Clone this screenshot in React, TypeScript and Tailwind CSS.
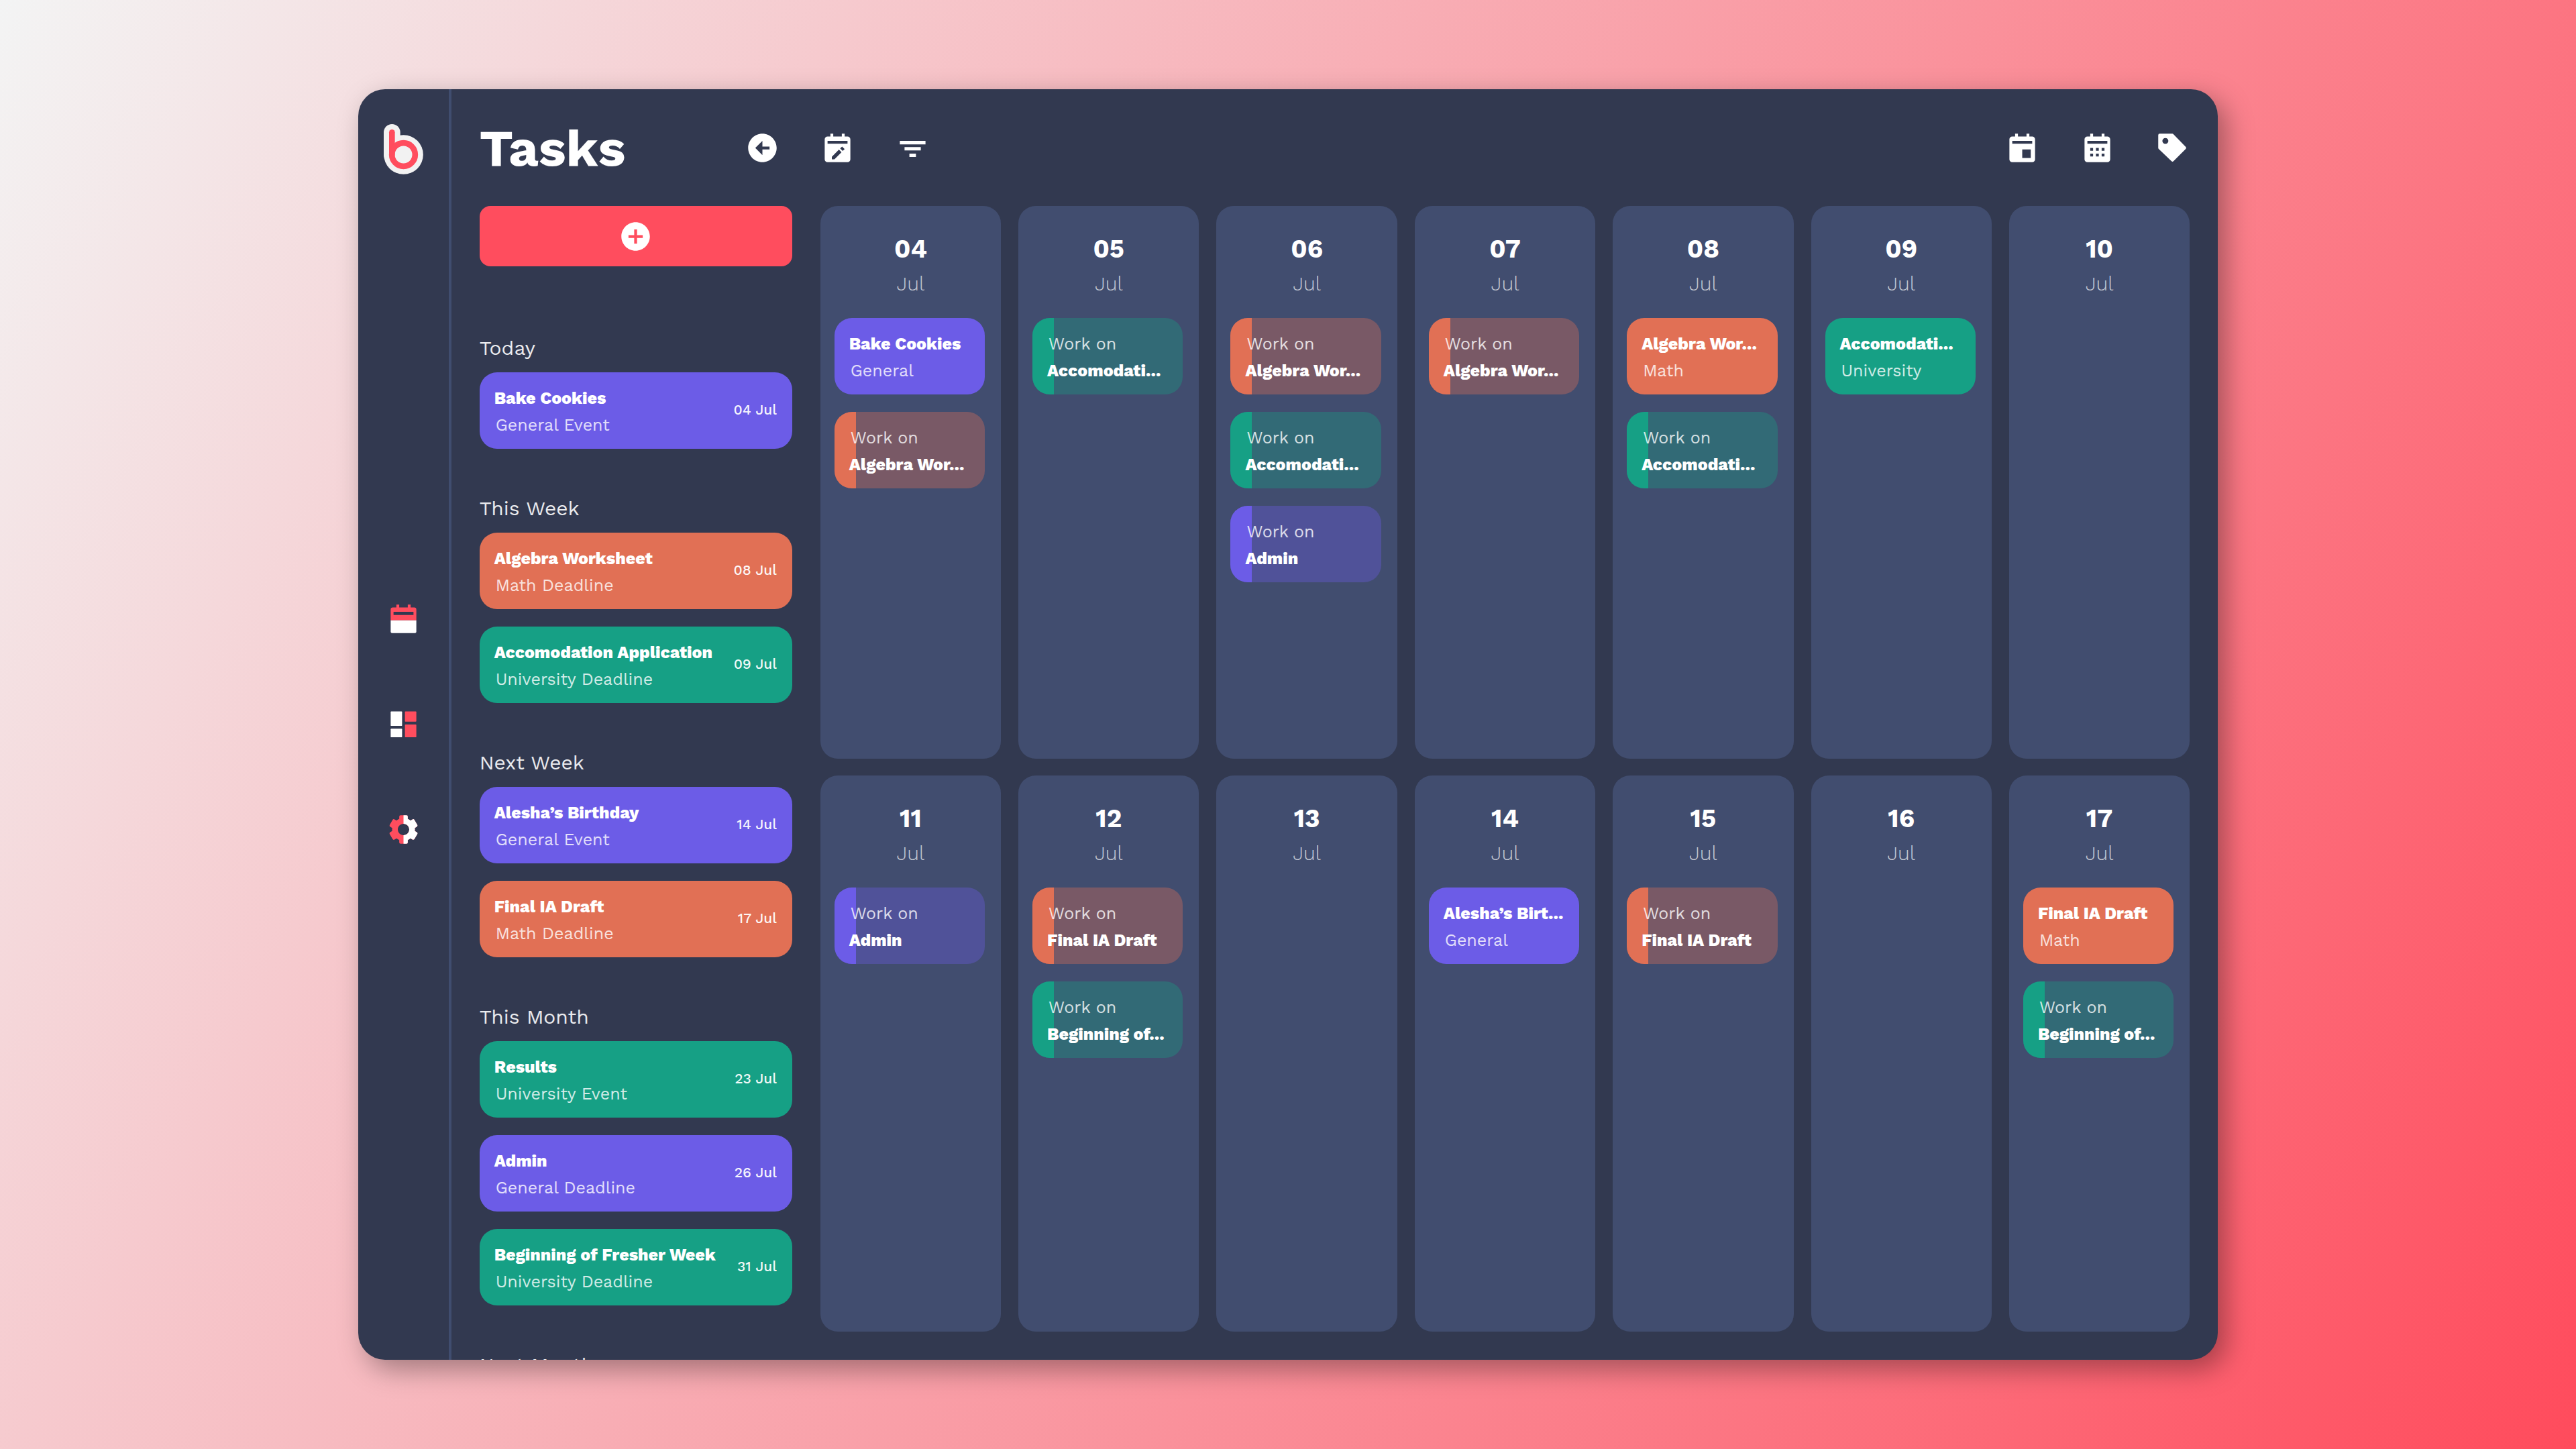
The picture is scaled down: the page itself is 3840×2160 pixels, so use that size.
import React from "react";
import {
  BiSolidCalendar,
  BiSolidCalendarEdit,
  BiSolidCalendarEvent,
  BiSolidLeftArrowCircle,
  BiSolidPlusCircle,
} from "react-icons/bi";

type Tone = "purple" | "orange" | "green";

const solid: Record<Tone, string> = {
  purple: "bg-[#6c5ce7]",
  orange: "bg-[#e17055]",
  green: "bg-[#16a085]",
};

const faded: Record<Tone, string> = {
  purple: "bg-[#6c5ce7]/35",
  orange: "bg-[#e17055]/35",
  green: "bg-[#16a085]/35",
};

interface Task {
  title: string;
  kind: string;
  date: string;
  tone: Tone;
}

interface Entry {
  title: string;
  kind?: string;
  tone: Tone;
}

interface Day {
  day: string;
  entries: Entry[];
}

const sections: { label: string; tasks: Task[] }[] = [
  {
    label: "Today",
    tasks: [{ title: "Bake Cookies", kind: "General Event", date: "04 Jul", tone: "purple" }],
  },
  {
    label: "This Week",
    tasks: [
      { title: "Algebra Worksheet", kind: "Math Deadline", date: "08 Jul", tone: "orange" },
      { title: "Accomodation Application", kind: "University Deadline", date: "09 Jul", tone: "green" },
    ],
  },
  {
    label: "Next Week",
    tasks: [
      { title: "Alesha’s Birthday", kind: "General Event", date: "14 Jul", tone: "purple" },
      { title: "Final IA Draft", kind: "Math Deadline", date: "17 Jul", tone: "orange" },
    ],
  },
  {
    label: "This Month",
    tasks: [
      { title: "Results", kind: "University Event", date: "23 Jul", tone: "green" },
      { title: "Admin", kind: "General Deadline", date: "26 Jul", tone: "purple" },
      { title: "Beginning of Fresher Week", kind: "University Deadline", date: "31 Jul", tone: "green" },
    ],
  },
  { label: "Next Month", tasks: [] },
];

const days: Day[] = [
  {
    day: "04",
    entries: [
      { title: "Bake Cookies", kind: "General", tone: "purple" },
      { title: "Algebra Wor...", tone: "orange" },
    ],
  },
  { day: "05", entries: [{ title: "Accomodati...", tone: "green" }] },
  {
    day: "06",
    entries: [
      { title: "Algebra Wor...", tone: "orange" },
      { title: "Accomodati...", tone: "green" },
      { title: "Admin", tone: "purple" },
    ],
  },
  { day: "07", entries: [{ title: "Algebra Wor...", tone: "orange" }] },
  {
    day: "08",
    entries: [
      { title: "Algebra Wor...", kind: "Math", tone: "orange" },
      { title: "Accomodati...", tone: "green" },
    ],
  },
  { day: "09", entries: [{ title: "Accomodati...", kind: "University", tone: "green" }] },
  { day: "10", entries: [] },
  { day: "11", entries: [{ title: "Admin", tone: "purple" }] },
  {
    day: "12",
    entries: [
      { title: "Final IA Draft", tone: "orange" },
      { title: "Beginning of...", tone: "green" },
    ],
  },
  { day: "13", entries: [] },
  { day: "14", entries: [{ title: "Alesha’s Birt...", kind: "General", tone: "purple" }] },
  { day: "15", entries: [{ title: "Final IA Draft", tone: "orange" }] },
  { day: "16", entries: [] },
  {
    day: "17",
    entries: [
      { title: "Final IA Draft", kind: "Math", tone: "orange" },
      { title: "Beginning of...", tone: "green" },
    ],
  },
];

function Logo() {
  return (
    <svg viewBox="31 48 177 225" className="w-[59px] h-[75px]" aria-hidden="true">
      <g fill="none" strokeLinecap="round">
        <path d="M68 85V185" stroke="#f2f2f2" strokeWidth="74" />
        <circle cx="119.5" cy="184.5" r="88" fill="#f2f2f2" />
        <path d="M68 85V185" stroke="#ff4d5e" strokeWidth="26" />
        <circle cx="119.5" cy="184.5" r="52" stroke="#ff4d5e" strokeWidth="26" />
      </g>
    </svg>
  );
}

function CalendarGlyph() {
  return (
    <svg viewBox="0 0 24 24" className="size-[51px]" aria-hidden="true">
      <path
        fill="#ff4d5e"
        fillRule="evenodd"
        d="M3 13V5.500A1.500 1.500 0 0 1 4.500 4H7V2h2v2h6V2h2v2h2.500A1.500 1.500 0 0 1 21 5.500V13zM5 7v2.300h14V7z"
      />
      <path fill="#fff" d="M3 13h18v8a1 1 0 0 1-1 1H4a1 1 0 0 1-1-1z" />
    </svg>
  );
}

function DashboardGlyph() {
  return (
    <svg viewBox="0 0 24 24" className="size-[51px]" aria-hidden="true">
      <g fill="#fff">
        <rect x="3" y="3" width="8" height="10.200" rx="0.400" />
        <rect x="3" y="15.200" width="8" height="6" rx="0.400" />
      </g>
      <g fill="#ff4d5e">
        <rect x="13" y="3" width="8" height="7.200" rx="0.400" />
        <rect x="13" y="12.200" width="8" height="9" rx="0.400" />
      </g>
    </svg>
  );
}

const cog =
  "m2.344 15.271 2 3.46a1 1 0 0 0 1.366.365l1.396-.806c.58.457 1.221.832 1.895 1.112V21a1 1 0 0 0 1 1h4a1 1 0 0 0 1-1v-1.598a8.094 8.094 0 0 0 1.895-1.112l1.396.806c.477.275 1.091.11 1.366-.365l2-3.46a1.004 1.004 0 0 0-.365-1.366l-1.372-.793a7.683 7.683 0 0 0-.002-2.224l1.372-.793c.476-.275.641-.89.365-1.366l-2-3.46a1 1 0 0 0-1.366-.365l-1.396.806A8.034 8.034 0 0 0 15 4.598V3a1 1 0 0 0-1-1h-4a1 1 0 0 0-1 1v1.598A8.094 8.094 0 0 0 7.105 5.71L5.71 4.904a.999.999 0 0 0-1.366.365l-2 3.46a1.004 1.004 0 0 0 .365 1.366l1.372.793a7.683 7.683 0 0 0 0 2.224l-1.372.793c-.476.275-.641.89-.365 1.366zM12 8c2.206 0 4 1.794 4 4s-1.794 4-4 4-4-1.794-4-4 1.794-4 4-4z";

function CogGlyph() {
  return (
    <svg viewBox="0 0 24 24" className="size-[51px]" aria-hidden="true">
      <defs>
        <clipPath id="cog-right">
          <rect x="12" y="0" width="12" height="24" />
        </clipPath>
      </defs>
      <path d={cog} fill="#ff4d5e" />
      <path d={cog} fill="#fff" clipPath="url(#cog-right)" />
    </svg>
  );
}

function FilterGlyph() {
  return (
    <svg viewBox="0 0 24 24" className="size-[51px]" fill="currentColor" aria-hidden="true">
      <path d="M3 7.100h18v2.400H3zM6.300 11.400h11.400v2.400H6.300zM9.700 16h4.600v2.300H9.700z" />
    </svg>
  );
}

function TagGlyph() {
  return (
    <svg viewBox="0 0 24 24" className="size-[51px]" fill="currentColor" aria-hidden="true">
      <path
        fillRule="evenodd"
        d="M3 2h8.900c.27 0 .52.1.7.3l8.700 9a1 1 0 0 1 0 1.400l-8.600 8.600a1 1 0 0 1-1.400 0L2.300 12.700A1 1 0 0 1 2 12V3a1 1 0 0 1 1-1zM7 5a2.100 2.100 0 1 0 0 4.200A2.100 2.100 0 0 0 7 5z"
      />
    </svg>
  );
}

function IconButton({ label, children }: { label: string; children: React.ReactNode }) {
  return (
    <button type="button" aria-label={label} className="shrink-0 cursor-pointer">
      {children}
    </button>
  );
}

function TaskCard({ task }: { task: Task }) {
  return (
    <li className={`flex h-[114px] items-center justify-between rounded-[26px] pl-[22px] pr-[23px] ${solid[task.tone]}`}>
      <div className="pt-1 text-[25px] leading-[40px] whitespace-nowrap">
        <p className="font-extrabold">{task.title}</p>
        <p className="pl-0.5 text-white/80">{task.kind}</p>
      </div>
      <time className="pb-1 text-[21px] font-medium whitespace-nowrap text-white/95">{task.date}</time>
    </li>
  );
}

function EntryCard({ entry }: { entry: Entry }) {
  if (entry.kind) {
    return (
      <li className={`flex h-[114px] flex-col justify-center rounded-[26px] pt-1 pl-[22px] text-[25px] leading-[40px] whitespace-nowrap ${solid[entry.tone]}`}>
        <p className="font-extrabold">{entry.title}</p>
        <p className="pl-0.5 text-white/80">{entry.kind}</p>
      </li>
    );
  }
  return (
    <li className={`relative flex h-[114px] flex-col justify-center overflow-hidden rounded-[26px] pt-1 pl-[22px] text-[25px] leading-[40px] whitespace-nowrap ${faded[entry.tone]}`}>
      <span className={`absolute inset-y-0 left-0 w-8 ${solid[entry.tone]}`} />
      <p className="relative pl-0.5 text-white/80">Work on</p>
      <p className="relative font-extrabold">{entry.title}</p>
    </li>
  );
}

export default function App() {
  return (
    <div className="flex h-screen items-center justify-center bg-[linear-gradient(120deg,#f3f4f4,#ff4b5c)] font-['Work_Sans',Inter,sans-serif] text-white">
      <div className="flex h-[87.65%] w-[72.2%] overflow-hidden rounded-[40px] bg-[#323950] shadow-[12px_14px_40px_rgba(0,0,0,0.35)]">
        <aside className="relative flex w-[139px] shrink-0 flex-col items-center justify-center border-r-4 border-[#404d6f]">
          <a href="#home" aria-label="Home" className="absolute top-[52px]">
            <Logo />
          </a>
          <nav className="flex flex-col gap-[106px]">
            <IconButton label="Calendar">
              <CalendarGlyph />
            </IconButton>
            <IconButton label="Dashboard">
              <DashboardGlyph />
            </IconButton>
            <IconButton label="Settings">
              <CogGlyph />
            </IconButton>
          </nav>
        </aside>

        <main className="flex min-w-0 flex-1 flex-col px-[42px]">
          <header className="flex h-[174px] shrink-0 items-center justify-between">
            <div className="flex items-center gap-[61px]">
              <h1 className="w-[335px] text-[77px] leading-none font-bold">Tasks</h1>
              <IconButton label="Back">
                <BiSolidLeftArrowCircle className="size-[51px]" />
              </IconButton>
              <IconButton label="Edit calendar">
                <BiSolidCalendarEdit className="size-[51px]" />
              </IconButton>
              <IconButton label="Filter">
                <FilterGlyph />
              </IconButton>
            </div>
            <div className="flex items-center gap-[61px]">
              <IconButton label="Day view">
                <BiSolidCalendarEvent className="size-[51px]" />
              </IconButton>
              <IconButton label="Month view">
                <BiSolidCalendar className="size-[51px]" />
              </IconButton>
              <IconButton label="Tags">
                <TagGlyph />
              </IconButton>
            </div>
          </header>

          <div className="flex min-h-0 flex-1 gap-[42px]">
            <section aria-label="Task list" className="w-[466px] shrink-0">
              <button
                type="button"
                aria-label="Add task"
                className="flex h-[90px] w-full cursor-pointer items-center justify-center rounded-[16px] bg-[#ff4d5e]"
              >
                <BiSolidPlusCircle className="size-[51px]" />
              </button>
              <div className="mt-[102px] flex flex-col gap-[69px]">
                {sections.map((s) => (
                  <div key={s.label}>
                    <h2 className="mb-4 text-[30px] leading-[40px] text-white/90">{s.label}</h2>
                    <ul className="flex flex-col gap-[26px]">
                      {s.tasks.map((t) => (
                        <TaskCard key={t.title} task={t} />
                      ))}
                    </ul>
                  </div>
                ))}
              </div>
            </section>

            <section
              aria-label="Calendar"
              className="mb-[42px] grid min-w-0 flex-1 grid-cols-7 grid-rows-[206fr_207fr] gap-x-[26px] gap-y-[25px]"
            >
              {days.map((d) => (
                <article key={d.day} className="min-w-0 rounded-[26px] bg-[#414d6f] pt-[38px]">
                  <h3 className="text-center text-[38px] leading-[52px] font-bold">{d.day}</h3>
                  <p className="text-center text-[30px] leading-[52px] font-light text-white/70">Jul</p>
                  <ul className="mt-[25px] mr-[24px] ml-[21px] flex flex-col gap-[26px]">
                    {d.entries.map((e) => (
                      <EntryCard key={e.title} entry={e} />
                    ))}
                  </ul>
                </article>
              ))}
            </section>
          </div>
        </main>
      </div>
    </div>
  );
}
